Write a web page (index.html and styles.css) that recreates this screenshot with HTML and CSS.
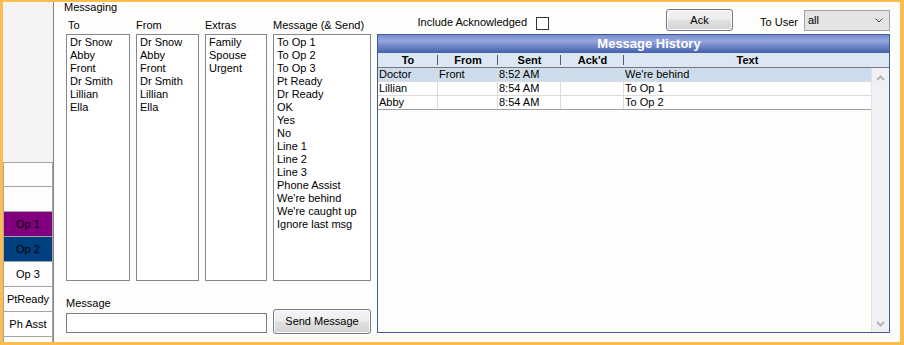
FILE: index.html
```html
<!DOCTYPE html>
<html lang="en">
<head>
    <meta charset="UTF-8">
    <title>Messaging</title>
    <link rel="stylesheet" href="styles.css">
</head>
<body>

<div class="frame">
    <div class="side">
        <div class="op-btn"></div>
        <div class="op-btn"></div>
        <div class="op-btn op-1">Op 1</div>
        <div class="op-btn op-2">Op 2</div>
        <div class="op-btn">Op 3</div>
        <div class="op-btn">PtReady</div>
        <div class="op-btn">Ph Asst</div>
        <div class="op-btn"></div>
    </div>

    <div class="main">
        <div class="compose">
            <div class="caption">Messaging</div>
            <div class="lists">
                <div class="list-col col-to">
                    <div class="list-label">To</div>
                    <div class="listbox">
                        <div>Dr Snow</div>
                        <div>Abby</div>
                        <div>Front</div>
                        <div>Dr Smith</div>
                        <div>Lillian</div>
                        <div>Ella</div>
                    </div>
                </div>
                <div class="list-col col-from">
                    <div class="list-label">From</div>
                    <div class="listbox">
                        <div>Dr Snow</div>
                        <div>Abby</div>
                        <div>Front</div>
                        <div>Dr Smith</div>
                        <div>Lillian</div>
                        <div>Ella</div>
                    </div>
                </div>
                <div class="list-col col-extras">
                    <div class="list-label">Extras</div>
                    <div class="listbox">
                        <div>Family</div>
                        <div>Spouse</div>
                        <div>Urgent</div>
                    </div>
                </div>
                <div class="list-col col-msg">
                    <div class="list-label">Message (&amp; Send)</div>
                    <div class="listbox">
                        <div>To Op 1</div>
                        <div>To Op 2</div>
                        <div>To Op 3</div>
                        <div>Pt Ready</div>
                        <div>Dr Ready</div>
                        <div>OK</div>
                        <div>Yes</div>
                        <div>No</div>
                        <div>Line 1</div>
                        <div>Line 2</div>
                        <div>Line 3</div>
                        <div>Phone Assist</div>
                        <div>We're behind</div>
                        <div>We're caught up</div>
                        <div>Ignore last msg</div>
                    </div>
                </div>
            </div>
            <div class="send-row">
                <div class="msg-field">
                    <div class="msg-label">Message</div>
                    <div class="text-input"></div>
                </div>
                <div class="btn send-btn">Send Message</div>
            </div>
        </div>

        <div class="history-pane">
            <div class="toolbar">
                <div class="include">
                    <span class="include-label">Include Acknowledged</span>
                    <span class="checkbox"></span>
                </div>
                <div class="btn ack-btn">Ack</div>
                <span class="touser-label">To User</span>
                <div class="combo">
                    <span>all</span>
                    <svg width="8" height="5" viewBox="0 0 8 5"><polyline points="0.5,0.5 4,4 7.5,0.5" fill="none" stroke="#444" stroke-width="1"/></svg>
                </div>
            </div>

            <div class="grid">
                <div class="grid-title">Message History</div>
                <div class="grid-head">
                    <div class="hcell">To</div>
                    <div class="hcell">From</div>
                    <div class="hcell">Sent</div>
                    <div class="hcell">Ack'd</div>
                    <div class="hcell last">Text</div>
                    <div class="hfill"></div>
                </div>
                <div class="grid-body">
                    <div class="rows">
                        <div class="row selected">
                            <div class="cell">Doctor</div>
                            <div class="cell">Front</div>
                            <div class="cell">8:52 AM</div>
                            <div class="cell"></div>
                            <div class="cell">We're behind</div>
                        </div>
                        <div class="row">
                            <div class="cell">Lillian</div>
                            <div class="cell"></div>
                            <div class="cell">8:54 AM</div>
                            <div class="cell"></div>
                            <div class="cell">To Op 1</div>
                        </div>
                        <div class="row last">
                            <div class="cell">Abby</div>
                            <div class="cell"></div>
                            <div class="cell">8:54 AM</div>
                            <div class="cell"></div>
                            <div class="cell">To Op 2</div>
                        </div>
                    </div>
                    <div class="vscroll">
                        <svg width="9" height="6" viewBox="0 0 9 6"><polyline points="1,5 4.5,1.5 8,5" fill="none" stroke="#b4b4b8" stroke-width="2"/></svg>
                        <svg width="9" height="6" viewBox="0 0 9 6"><polyline points="1,1 4.5,4.5 8,1" fill="none" stroke="#b4b4b8" stroke-width="2"/></svg>
                    </div>
                </div>
            </div>
        </div>
    </div>
</div>

</body>
</html>
```

FILE: styles.css
```css
body {
    margin: 0;
    font-family: "Liberation Sans", Arial, sans-serif;
    font-size: 11px;
    line-height: 13px;
    color: #000;
    background: #fdfefb;
}
.frame {
    box-sizing: border-box;
    width: 904px;
    height: 345px;
    display: flex;
    border-style: solid;
    border-color: #fbbd4e;
    border-width: 2px 4px 3px 3px;
    background: #fdfefb;
    overflow: hidden;
}

/* operatory buttons on the left */
.side {
    width: 50px;
    flex: none;
    padding-top: 160px;
    background: #f3f2f5;
    border-right: 1px solid #858585;
    overflow: hidden;
}
.op-btn {
    box-sizing: border-box;
    width: 50px;
    height: 25px;
    line-height: 24px;
    text-align: center;
    background: #fdfdfd;
    border: 1px solid #a6a6a6;
    border-top: none;
}
.op-btn:first-child {
    height: 25px;
    border-top: 1px solid #a6a6a6;
    line-height: 23px;
}
.op-1 {
    background: #800080;
}
.op-2 {
    background: #004080;
}

.main {
    flex: 1;
    display: flex;
}

/* compose side */
.compose {
    width: 305px;
    padding-left: 12px;
    flex: none;
}
.caption {
    margin: -1px 0 0 -2px;
}
.lists {
    display: flex;
    gap: 6px;
    margin-top: 5px;
}
.list-label {
    margin-bottom: 2px;
}
.col-to .list-label {
    padding-left: 2px;
}
.col-to { width: 64px; }
.col-from { width: 63px; }
.col-extras { width: 62px; }
.col-msg { width: 98px; }
.listbox {
    box-sizing: border-box;
    height: 247px;
    padding: 1px 3px;
    background: #fff;
    border: 1px solid #828790;
    white-space: nowrap;
    overflow: hidden;
}
.send-row {
    display: flex;
    align-items: flex-end;
    margin-top: 16px;
}
.text-input {
    box-sizing: border-box;
    width: 201px;
    height: 20px;
    margin: 3px 0 1px;
    background: #fff;
    border: 1px solid #7a7a7a;
}
.btn {
    box-sizing: border-box;
    text-align: center;
    border: 1px solid #707a8a;
    border-radius: 3px;
    background: linear-gradient(#f4f4f4, #ececec 48%, #dfdfdf 52%, #d4d4d4);
    box-shadow: inset 0 0 0 1px #fbfbfb;
}
.send-btn {
    width: 98px;
    height: 25px;
    line-height: 23px;
    margin-left: 6px;
}

/* history side */
.history-pane {
    width: 513px;
    margin-left: 6px;
    flex: none;
}
.toolbar {
    display: flex;
    align-items: flex-start;
    height: 32px;
}
.include {
    width: 172px;
    display: flex;
    justify-content: flex-end;
    align-items: flex-start;
}
.include-label {
    margin-top: 14px;
}
.checkbox {
    box-sizing: border-box;
    width: 13px;
    height: 13px;
    margin: 15px 0 0 9px;
    background: #fff;
    border: 1px solid #333;
}
.ack-btn {
    width: 67px;
    height: 22px;
    line-height: 20px;
    margin: 7px 0 0 117px;
}
.touser-label {
    margin: 14px 6px 0 auto;
}
.combo {
    box-sizing: border-box;
    width: 86px;
    height: 21px;
    margin-top: 8px;
    padding: 0 6px 0 3px;
    display: flex;
    align-items: center;
    justify-content: space-between;
    background: #e4e4e4;
    border: 1px solid #a3a3a3;
}

.grid {
    box-sizing: border-box;
    height: 299px;
    display: flex;
    flex-direction: column;
    background: #fdfefb;
    border: 1px solid #3d5c9c;
}
.grid-title {
    height: 18px;
    line-height: 18px;
    padding-left: 31px;
    text-align: center;
    font-size: 13px;
    font-weight: bold;
    color: #fff;
    background: linear-gradient(#7b8fcf, #95a7de 35%, #7288cb 60%, #4361a9);
}
.grid-head {
    display: flex;
    height: 15px;
    background: #dce7f3;
    border-bottom: 1px solid #777;
    box-sizing: border-box;
}
.hcell {
    line-height: 14px;
    text-align: center;
    font-weight: bold;
    background: linear-gradient(#5c5c5c, #5c5c5c) right 0 top 2px / 1px 10px no-repeat;
}
.hcell.last {
    background: none;
}
.hcell:nth-child(1), .cell:nth-child(1) { width: 60px; }
.hcell:nth-child(2), .cell:nth-child(2) { width: 60px; }
.hcell:nth-child(3), .cell:nth-child(3) { width: 63px; }
.hcell:nth-child(4), .cell:nth-child(4) { width: 63px; }
.hcell:nth-child(5), .cell:nth-child(5) { width: 247px; }
.hfill {
    flex: 1;
}
.grid-body {
    flex: 1;
    display: flex;
}
.rows {
    flex: 1;
}
.row {
    display: flex;
    height: 14px;
    box-sizing: border-box;
    background: #fff;
    border-bottom: 1px solid #dcdcdc;
}
.row.selected {
    background: #cddcea;
}
.row.last {
    border-bottom-color: #a0a0a0;
}
.cell {
    box-sizing: border-box;
    padding-left: 1px;
    line-height: 13px;
    white-space: nowrap;
    border-right: 1px solid #dcdcdc;
}
.cell:last-child {
    border-right: none;
}
.vscroll {
    width: 18px;
    flex: none;
    display: flex;
    flex-direction: column;
    justify-content: space-between;
    align-items: center;
    padding: 7px 0 5px;
    box-sizing: border-box;
    background: #f1f0f4;
    border-left: 1px solid #e2e2e6;
}
```
